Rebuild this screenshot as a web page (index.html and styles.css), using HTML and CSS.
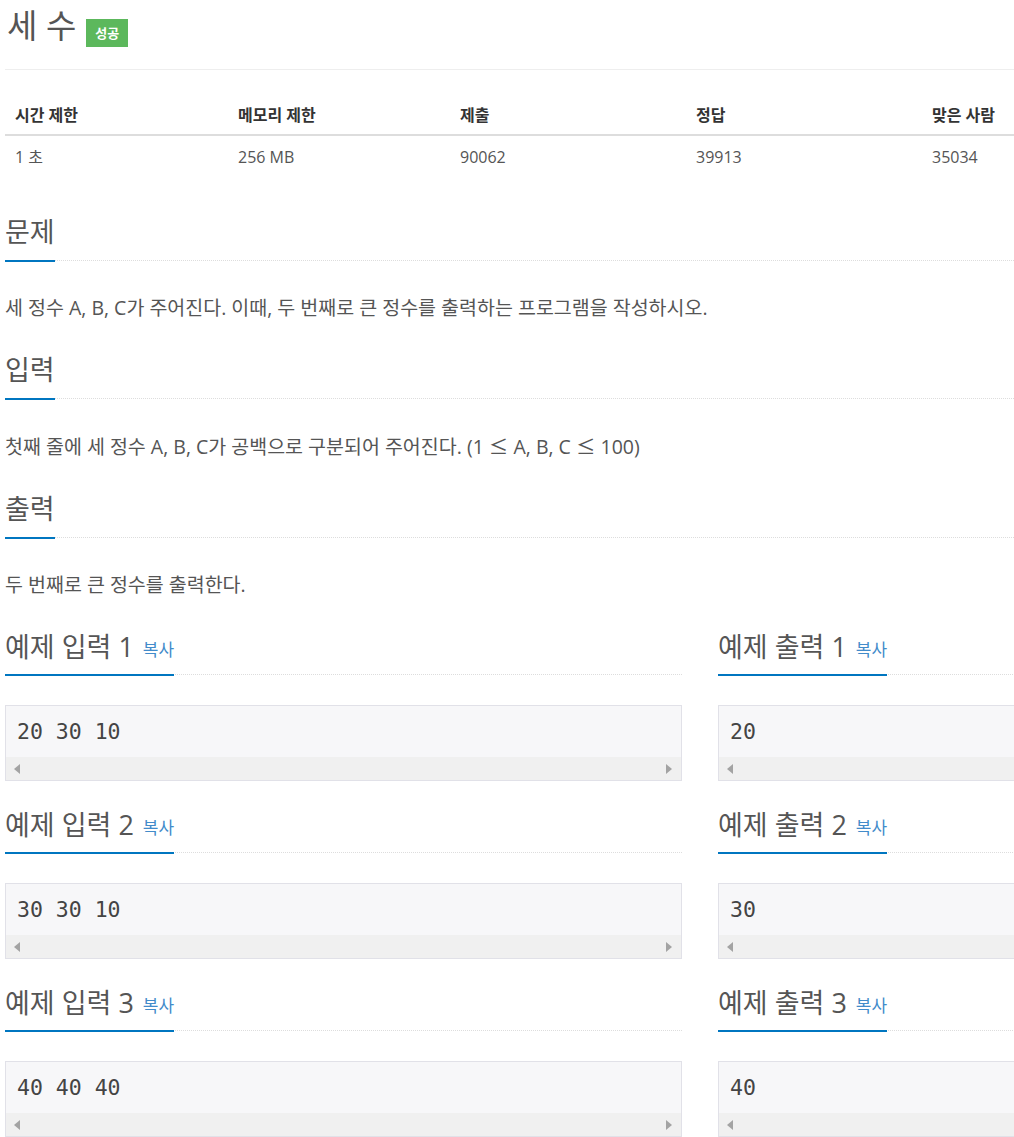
FILE: index.html
```html
<!DOCTYPE html>
<html lang="ko">
<head>
<meta charset="utf-8">
<title>세 수</title>
<link rel="stylesheet" href="styles.css">
</head>
<body>
<div class="page">
  <div class="page-header">
    <h1 class="title">세 수</h1>
    <span class="label-success">성공</span>
  </div>

  <table class="info">
    <thead>
      <tr>
        <th class="c1">시간 제한</th>
        <th class="c2">메모리 제한</th>
        <th class="c3">제출</th>
        <th class="c4">정답</th>
        <th class="c5">맞은 사람</th>
      </tr>
    </thead>
    <tbody>
      <tr>
        <td>1 초</td>
        <td>256 MB</td>
        <td>90062</td>
        <td>39913</td>
        <td>35034</td>
      </tr>
    </tbody>
  </table>

  <section class="problem-section first">
    <div class="headline"><h2>문제</h2></div>
    <p class="problem-text">세 정수 A, B, C가 주어진다. 이때, 두 번째로 큰 정수를 출력하는 프로그램을 작성하시오.</p>
  </section>

  <section class="problem-section">
    <div class="headline"><h2>입력</h2></div>
    <p class="problem-text">첫째 줄에 세 정수 A, B, C가 공백으로 구분되어 주어진다. (1 <span class="le">≤</span> A, B, C <span class="le">≤</span> 100)</p>
  </section>

  <section class="problem-section">
    <div class="headline"><h2>출력</h2></div>
    <p class="problem-text">두 번째로 큰 정수를 출력한다.</p>
  </section>

  <div class="samples">
    <div class="sample">
      <div class="headline sample-head"><h2>예제 입력 1 <button class="copy">복사</button></h2></div>
      <div class="sampledata"><pre>20 30 10</pre><div class="scroll"><span class="arr-l"></span><span class="arr-r"></span></div></div>
    </div>
    <div class="sample">
      <div class="headline sample-head"><h2>예제 출력 1 <button class="copy">복사</button></h2></div>
      <div class="sampledata"><pre>20</pre><div class="scroll"><span class="arr-l"></span><span class="arr-r"></span></div></div>
    </div>
    <div class="sample">
      <div class="headline sample-head"><h2>예제 입력 2 <button class="copy">복사</button></h2></div>
      <div class="sampledata"><pre>30 30 10</pre><div class="scroll"><span class="arr-l"></span><span class="arr-r"></span></div></div>
    </div>
    <div class="sample">
      <div class="headline sample-head"><h2>예제 출력 2 <button class="copy">복사</button></h2></div>
      <div class="sampledata"><pre>30</pre><div class="scroll"><span class="arr-l"></span><span class="arr-r"></span></div></div>
    </div>
    <div class="sample">
      <div class="headline sample-head"><h2>예제 입력 3 <button class="copy">복사</button></h2></div>
      <div class="sampledata"><pre>40 40 40</pre><div class="scroll"><span class="arr-l"></span><span class="arr-r"></span></div></div>
    </div>
    <div class="sample">
      <div class="headline sample-head"><h2>예제 출력 3 <button class="copy">복사</button></h2></div>
      <div class="sampledata"><pre>40</pre><div class="scroll"><span class="arr-l"></span><span class="arr-r"></span></div></div>
    </div>
  </div>
</div>
</body>
</html>
```

FILE: styles.css
```css
html, body {
  margin: 0;
  padding: 0;
  overflow: hidden;
  background: #fff;
}
body {
  font-family: "Open Sans", "Noto Sans CJK KR", sans-serif;
  color: #555;
  font-size: 16px;
}
.page {
  padding-left: 5px;
  width: 1390px;
}
.page-header {
  display: flex;
  align-items: flex-start;
  padding: 8px 0 22px 0;
  border-bottom: 1px solid #eee;
  width: 1009px;
}
.title {
  margin: 0 0 0 2px;
  font-size: 33px;
  font-weight: 400;
  line-height: 36px;
  color: #555;
}
.label-success {
  margin: 11px 0 0 10px;
  background: #5cb85c;
  color: #fff;
  font-size: 13px;
  font-weight: 700;
  width: 42px;
  height: 28px;
  line-height: 28px;
  text-align: center;
}
.info {
  border-collapse: collapse;
  margin-top: 27px;
  width: 1009px;
  table-layout: fixed;
  font-size: 16px;
}
.info th {
  text-align: left;
  font-weight: 700;
  color: #333;
  padding: 8px 10px 9px;
  line-height: 20px;
  border-bottom: 2px solid #ddd;
}
.info td {
  padding: 10px 10px 8px;
  line-height: 22px;
  color: #555;
}
.c1 { width: 203px; }
.c2 { width: 202px; }
.c3 { width: 216px; }
.c4 { width: 216px; }
.problem-section {
  width: 1009px;
  margin-top: 29px;
}
.problem-section.first {
  margin-top: 38px;
}
.headline {
  border-bottom: 1px dotted #ddd;
  margin: 0 0 32px 0;
}
.headline h2 {
  display: inline-block;
  margin: 0 0 -2px 0;
  padding: 1px 0 11px 0;
  border-bottom: 2px solid #0076c0;
  font-size: 27px;
  font-weight: 400;
  line-height: 34px;
  color: #555;
}
.problem-text {
  margin: 0;
  font-size: 19.5px;
  line-height: 30px;
  color: #555;
}
.le {
  font-family: "Noto Sans CJK KR", sans-serif;
}
.samples {
  display: grid;
  grid-template-columns: 677px 677px;
  column-gap: 36px;
  row-gap: 25px;
  margin-top: 28px;
}
.sample-head {
  margin-bottom: 30px;
}
.sample-head h2 {
  padding: 2px 0 10px 0;
}
.copy {
  border: 0;
  background: none;
  padding: 0;
  margin-left: 2px;
  font-family: inherit;
  font-size: 17px;
  color: #428bca;
  vertical-align: 1px;
}
.sampledata {
  border: 1px solid #e1e1e8;
  background: #f7f7f9;
}
.sampledata pre {
  margin: 0;
  padding: 15px 11px 14px;
  font-family: "DejaVu Sans Mono", monospace;
  font-size: 21.5px;
  line-height: 22px;
  color: #444;
}
.scroll {
  height: 23px;
  background: #f0f0f0;
  display: flex;
  justify-content: space-between;
  align-items: center;
  padding: 0 9px 0 8px;
}
.arr-l, .arr-r {
  width: 0;
  height: 0;
  border-top: 5px solid transparent;
  border-bottom: 5px solid transparent;
}
.arr-l { border-right: 6px solid #a3a3a3; }
.arr-r { border-left: 6px solid #a3a3a3; }
```
